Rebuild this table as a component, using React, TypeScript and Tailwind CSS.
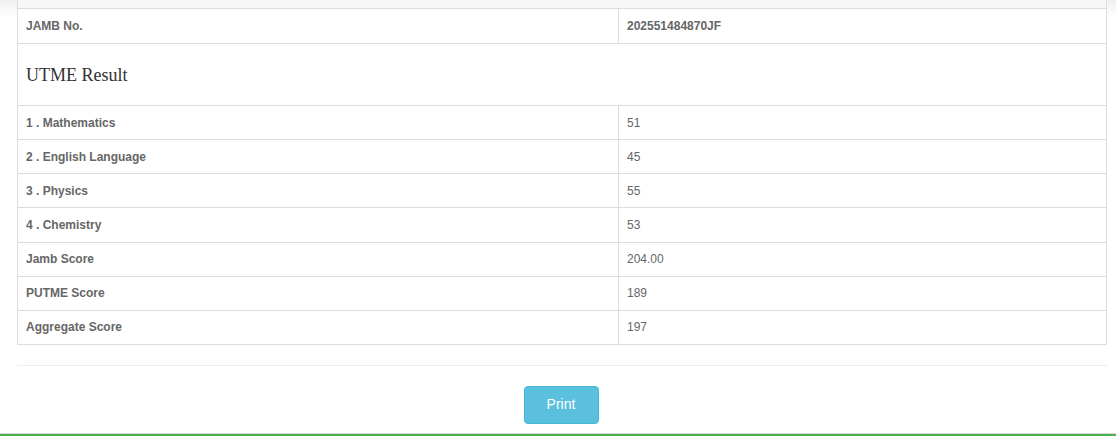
import React from 'react';

const rows: { label: string; value: string }[] = [
  { label: '1 . Mathematics', value: '51' },
  { label: '2 . English Language', value: '45' },
  { label: '3 . Physics', value: '55' },
  { label: '4 . Chemistry', value: '53' },
  { label: 'Jamb Score', value: '204.00' },
  { label: 'PUTME Score', value: '189' },
  { label: 'Aggregate Score', value: '197' },
];

function Row({ label, value, bold, tall }: { label: string; value: string; bold?: boolean; tall?: boolean }) {
  const h = tall ? 'h-[34px]' : 'h-[33.15px]';
  return (
    <div className="grid grid-cols-[600px_1fr] border-b border-[#dddddd]">
      <div className={`${h} flex items-center px-[8px] font-bold`}>{label}</div>
      <div className={`${h} flex items-center px-[8px] border-l border-[#dddddd] ${bold ? 'font-bold' : ''}`}>
        {value}
      </div>
    </div>
  );
}

export default function App() {
  return (
    <div className="w-[1116px] h-[436px] overflow-hidden bg-[linear-gradient(#f0f0f0,#ffffff_18px)] font-['Liberation_Sans',Arial,sans-serif] text-[12px] text-[#666666]">
      <div className="pl-[17px] pr-[9px]">
        {/* tail of the row scrolled above */}
        <div className="h-[8px] border-x border-[#dddddd] bg-[#f6f6f6]" />

        <div className="border border-[#dddddd] bg-white">
          <Row label="JAMB No." value="202551484870JF" bold tall />
          <div className="h-[62px] flex items-center px-[8px] border-b border-[#dddddd]">
            <h4 className="font-['Liberation_Serif','Times_New_Roman',serif] text-[18px] text-[#333333] pt-[1px]">UTME Result</h4>
          </div>
          {rows.map((r, i) => (
            <div key={r.label} className={i === rows.length - 1 ? '[&>div]:border-b-0' : ''}>
              <Row label={r.label} value={r.value} />
            </div>
          ))}
        </div>

        <hr className="mt-[20px] border-t border-[#eeeeee]" />

        <div className="flex justify-center pt-[20px] pr-[2px]">
          <button className="w-[75px] h-[38px] rounded-[4px] bg-[#5bc0de] border border-[#46b8da] text-white text-[14px]">
            Print
          </button>
        </div>
      </div>
      <div className="mt-[9px] border-t border-[#d6d6d6]" />
      <div className="h-[2px] bg-[#4caf50]" />
    </div>
  );
}
